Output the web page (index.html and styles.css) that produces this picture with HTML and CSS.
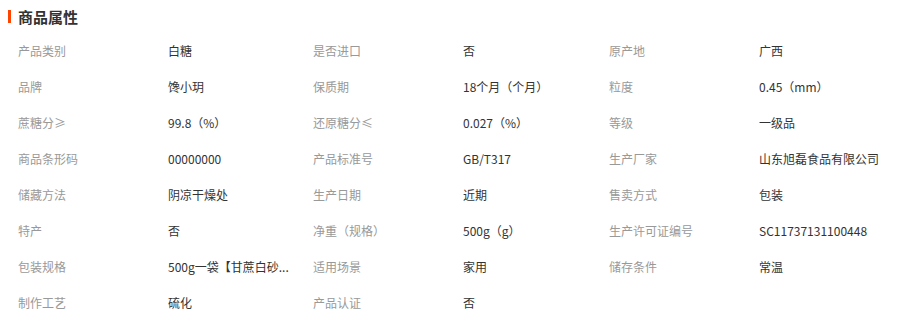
FILE: index.html
```html
<!DOCTYPE html>
<html lang="zh-CN">
<head>
<meta charset="utf-8">
<title>商品属性</title>
<link rel="stylesheet" href="styles.css">
</head>
<body>
<div class="panel">
  <h2 class="title"><span class="bar"></span>商品属性</h2>
  <div class="grid">
    <div class="k">产品类别</div><div class="v">白糖</div>
    <div class="k">是否进口</div><div class="v">否</div>
    <div class="k">原产地</div><div class="v">广西</div>

    <div class="k">品牌</div><div class="v">馋小玥</div>
    <div class="k">保质期</div><div class="v">18个月（个月）</div>
    <div class="k">粒度</div><div class="v">0.45（mm）</div>

    <div class="k">蔗糖分≥</div><div class="v">99.8（%）</div>
    <div class="k">还原糖分≤</div><div class="v">0.027（%）</div>
    <div class="k">等级</div><div class="v">一级品</div>

    <div class="k">商品条形码</div><div class="v">00000000</div>
    <div class="k">产品标准号</div><div class="v">GB/T317</div>
    <div class="k">生产厂家</div><div class="v">山东旭磊食品有限公司</div>

    <div class="k">储藏方法</div><div class="v">阴凉干燥处</div>
    <div class="k">生产日期</div><div class="v">近期</div>
    <div class="k">售卖方式</div><div class="v">包装</div>

    <div class="k">特产</div><div class="v">否</div>
    <div class="k">净重（规格）</div><div class="v">500g（g）</div>
    <div class="k">生产许可证编号</div><div class="v">SC11737131100448</div>

    <div class="k">包装规格</div><div class="v" title="500g一袋【甘蔗白砂糖】">500g一袋【甘蔗白砂...</div>
    <div class="k">适用场景</div><div class="v">家用</div>
    <div class="k">储存条件</div><div class="v">常温</div>

    <div class="k">制作工艺</div><div class="v">硫化</div>
    <div class="k">产品认证</div><div class="v">否</div>
  </div>
</div>
</body>
</html>
```

FILE: styles.css
```css
html, body {
  margin: 0;
  padding: 0;
  background: #fff;
}
body {
  font-family: "Microsoft YaHei", "Noto Sans CJK SC", "Noto Sans", sans-serif;
  font-size: 12px;
  color: #333;
}
.panel {
  width: 912px;
}
.title {
  display: flex;
  align-items: center;
  gap: 7px;
  margin: 0;
  padding-left: 8px;
  height: 33px;
  font-size: 15px;
  font-weight: bold;
  color: #333;
  line-height: 1;
}
.bar {
  display: block;
  width: 3px;
  height: 13px;
  background: #ff4400;
}
.grid {
  display: grid;
  grid-template-columns: 150px 145px 150px 146px 150px 1fr;
  grid-auto-rows: 36px;
  padding-left: 18px;
}
.k, .v {
  line-height: 36px;
  white-space: nowrap;
}
.k {
  color: #999;
}
.v {
  color: #333;
}
```
